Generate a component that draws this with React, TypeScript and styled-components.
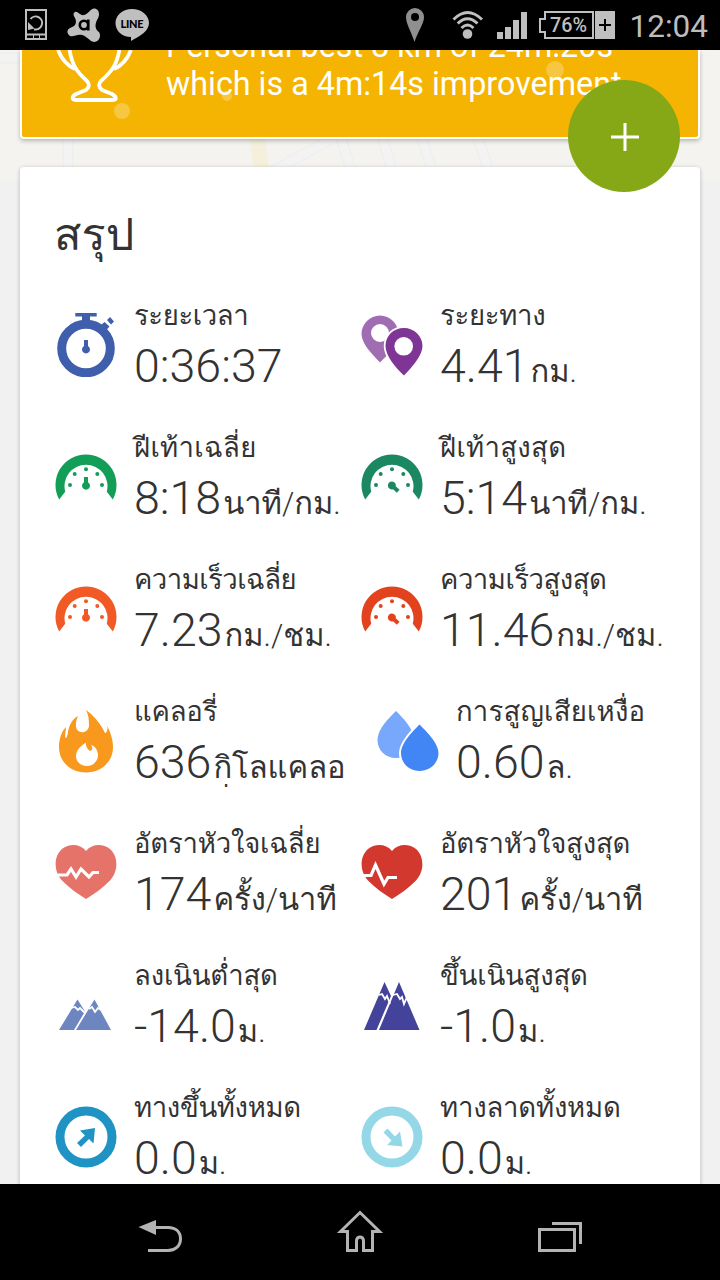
import React from "react";
import styled, { createGlobalStyle } from "styled-components";

const GlobalStyle = createGlobalStyle`
  * { box-sizing: border-box; }
  body { margin: 0; background: #000; font-family: Roboto, Loma, sans-serif; }
  svg { display: block; flex: none; }
`;

const Phone = styled.div`
  width: 720px;
  height: 1280px;
  display: flex;
  flex-direction: column;
  overflow: hidden;
  background: #000;
`;

const StatusBar = styled.header`
  height: 50px;
  flex: none;
  display: flex;
  align-items: center;
  background: #000;
  color: #bfbfbf;
  padding: 0 12px 0 20px;
`;

const Notices = styled.div`
  display: flex;
  flex: 1;
`;

const Clock = styled.div`
  width: 80px;
  margin-left: 12px;
  font-size: 31.5px;
  line-height: 48px;
  white-space: nowrap;
  text-align: right;
  color: #bdbdbd;
  padding-top: 3px;
`;

const Screen = styled.main`
  position: relative;
  flex: 1;
  min-height: 0;
  overflow: hidden;
  background: #f1f1f1;
  padding: 0 20px;
`;

const MapBackdrop = styled.div`
  position: absolute;
  inset: 0 0 auto 0;
  height: 131px;
`;

const Banner = styled.section`
  position: relative;
  height: 89px;
  overflow: hidden;
  border: solid #fff;
  border-width: 0 2px 2px;
  border-radius: 0 0 4px 4px;
  background: #f5b402;
  display: flex;
  box-shadow: 0 2px 4px rgba(0, 0, 0, 0.25);
`;

const BannerArt = styled.div`
  width: 144px;
`;

const BannerText = styled.p`
  position: relative;
  margin: -23px 0 0;
  color: #fff;
  font-size: 32.3px;
  line-height: 38px;
  white-space: nowrap;
`;

const BannerDots = styled.div`
  position: absolute;
  inset: 0;
`;

const AddButton = styled.button`
  position: absolute;
  left: 568px;
  top: 30px;
  width: 112px;
  height: 112px;
  padding: 2px 0 0 2px;
  border: 0;
  border-radius: 50%;
  background: #86a816;
  display: flex;
  align-items: center;
  justify-content: center;
`;

const Card = styled.section`
  position: relative;
  margin-top: 28px;
  height: 1100px;
  border-radius: 4px;
  background: #fff;
  padding: 32px 0 0 34px;
  box-shadow: 0 1px 4px rgba(0, 0, 0, 0.25);
`;

const Title = styled.h1`
  margin: 0;
  height: 93px;
  font-size: 45px;
  font-weight: 300;
  line-height: 72px;
  color: #333;
`;

const Row = styled.div`
  display: flex;
  height: 132px;
`;

const Metric = styled.div<{ $wide?: boolean }>`
  width: ${(p) => (p.$wide ? 322 : 306)}px;
  flex: none;
  display: flex;
`;

const IconBox = styled.div`
  width: 64px;
  height: 64px;
  margin: 21px 16px 0 0;
  flex: none;
`;

const Texts = styled.div`
  color: #333;
  white-space: nowrap;
`;

const Label = styled.div<{ $track: number }>`
  height: 48px;
  font-size: 27.5px;
  font-weight: 400;
  line-height: 48px;
  letter-spacing: ${(p) => p.$track}px;
`;

const Value = styled.div`
  display: flex;
  height: 56px;
  align-items: baseline;
  font-size: 46.5px;
  font-weight: 300;
  line-height: 52px;
`;

const Unit = styled.span`
  height: 38px;
  font-size: 30.9px;
  font-weight: 300;
  line-height: 38px;
  margin-left: 2px;
  clip-path: inset(-20px -5px 0 -5px);
`;

const NavBar = styled.nav`
  height: 96px;
  flex: none;
  background: #000;
`;

const Stopwatch = () => (
  <svg width="64" height="64" viewBox="0 0 64 64" fill="#3f5eab">
    <circle cx="32" cy="35.500" r="24.300" fill="none" stroke="#3f5eab" strokeWidth="9" />
    <path d="M21.300 0H42.700V3.500H36V8H28V3.500H21.300z" />
    <path d="M46 13L50.500 9L55.500 13.500L51.500 18zM53 7L56 4L60 8.500L57 11.500z" />
    <path d="M30 27H34V33A4 4 0 1 1 30 33z" />
  </svg>
);

const Pins = () => (
  <svg width="64" height="64" viewBox="6 0 64 64" fillRule="evenodd">
    <path fill="#a06cb2" d="M26 2.500C36 2.500 44.500 11 44.500 21C44.500 31 33 43 26 49.500C19 42 7.500 31 7.500 21C7.500 11 16 2.500 26 2.500zM26 11A9 9 0 1 0 26 29A9 9 0 1 0 26 11z" />
    <path fill="#7f3596" stroke="#fff" strokeWidth="3.500" paintOrder="stroke" d="M50 15C60 15 68.500 23 68.500 33C68.500 43 57 55 50 62.500C42 55 31.500 43 31.500 33C31.500 23 39 15 50 15z" />
    <circle cx="49.700" cy="33.300" r="9.300" fill="#fff" />
  </svg>
);

const Gauge = ({ color, fast }: { color: string; fast?: boolean }) => (
  <svg width="64" height="64" viewBox="0 0 64 64" fill={color}>
    <path d="M5.200 54.500A30.500 30.500 0 1 1 58.800 54.500L52.800 46.700A21.500 21.500 0 1 0 11.200 46.700z" />
    <circle cx="16" cy="40" r="2" />
    <circle cx="20.700" cy="29" r="2" />
    <circle cx="32" cy="24.300" r="2" />
    <circle cx="43.300" cy="29" r="2" />
    <circle cx="48" cy="40" r="2" />
    <path transform={fast ? "rotate(133 32 40.500)" : undefined} d="M30 32H34V37.200A4 4 0 1 1 30 37.200z" />
  </svg>
);

const Flame = () => (
  <svg width="64" height="64" viewBox="0 0 64 64">
    <path fill="#f8981d" d="M32 1C39 6 45 13 49 20C51 24 51 26 53 22C54 20 53 17 53 17C56 22 59 30 59 38C59 53 47 63.500 32 63.500C17 63.500 5 53 5 38C5 29 8 22 12 18C12 21 10.500 26 11.500 29C13 29 13.500 26 14 23C15 17 18 10 24 7C22 11 21 17 23 20.500C26 25 34 24 35 17C35 12 35 7 32 1z" />
    <path fill="#fff" d="M32 33.500C26 37 22 42 22 47C22 53 27 57 33 57C39 57 44 52 44 46.500C44 41 41 37 37 36C39 39 38.500 41 36 42C33 40 31.500 37 32 33.500z" />
  </svg>
);

const Drops = () => (
  <svg width="64" height="64" viewBox="0 0 64 64">
    <path fill="#78a8fb" d="M20 2C27 9 38 20 38 31C38 42 30 49 20 49C9 49 1.500 41 1.500 31C1.500 20 13 9 20 2z" />
    <path fill="#4285f4" stroke="#fff" strokeWidth="4" paintOrder="stroke" d="M43.500 15.500C50 22 62.500 34 62.500 44C62.500 54 54 62 43.500 62C33 62 25 54 25 44C25 34 37 22 43.500 15.500z" />
  </svg>
);

const Heart = ({ color, pulse }: { color: string; pulse: string }) => (
  <svg width="64" height="64" viewBox="0 0 64 64">
    <path fill={color} d="M32 10C38 2.500 49 2.500 56 8C65 16 64 31 56 39.500C49 47 40 53 32 58C24 53 15 47 8 39.500C0 31-1 16 8 8C15 2.500 26 2.500 32 10z" />
    <path fill="none" stroke="#fff" strokeWidth="3.200" d={pulse} />
  </svg>
);

const HillsLow = () => (
  <svg width="64" height="64" viewBox="0 -4 64 64">
    <path fill="#6e86c0" d="M5 53L23.500 22.500L31 34.500L20 53zM22 53L40.500 22.500L57 53z" />
    <path fill="none" stroke="#fff" strokeWidth="1.800" d="M17 31L21 30L24 33L26 31L31 36M35 32L38 30L41 35L44 31L47 33" />
  </svg>
);

const HillsHigh = () => (
  <svg width="64" height="64" viewBox="-2 -4 64 64">
    <path fill="#43439b" d="M2 53L22.500 5L29 19L14.500 53zM17 53L37 5L57.500 53z" />
    <path fill="none" stroke="#fff" strokeWidth="1.800" d="M17 18L20 17L23 22L25 19L28 27M31 18L35 17L38 22L40 20L42 27L45 20" />
  </svg>
);

const ArrowRing = ({ color, down }: { color: string; down?: boolean }) => (
  <svg width="64" height="64" viewBox="0 0 64 64">
    <circle cx="32" cy="32" r="26" fill="none" stroke={color} strokeWidth="9" />
    <path fill={color} transform={down ? "translate(1.500 0.500) rotate(90 32 32)" : undefined} d="M41 23L39.500 38.500L35 34L27 42L23 38L31 30.500L26 25.500z" />
  </svg>
);

type Item = {
  icon: React.ReactNode;
  label: string;
  value: string;
  unit?: React.ReactNode;
  track?: number;
  wide?: boolean;
};

const rows: Item[][] = [
  [
    { icon: <Stopwatch />, label: "ระยะเวลา", value: "0:36:37", track: -0.4 },
    { icon: <Pins />, label: "ระยะทาง", value: "4.41", unit: "กม.", track: -0.3 },
  ],
  [
    { icon: <Gauge color="#139e58" />, label: "ฝีเท้าเฉลี่ย", value: "8:18", unit: "นาที/กม.", track: 0.3 },
    { icon: <Gauge color="#1b8862" fast />, label: "ฝีเท้าสูงสุด", value: "5:14", unit: "นาที/กม.", track: 0.3 },
  ],
  [
    { icon: <Gauge color="#f15a24" />, label: "ความเร็วเฉลี่ย", value: "7.23", unit: "กม./ชม.", track: -0.55 },
    { icon: <Gauge color="#e2431e" fast />, label: "ความเร็วสูงสุด", value: "11.46", unit: "กม./ชม.", track: -0.5 },
  ],
  [
    { icon: <Flame />, label: "แคลอรี่", value: "636", unit: <>กิโลแคลอ<br />รี่</>, wide: true, track: -0.2 },
    { icon: <Drops />, label: "การสูญเสียเหงื่อ", value: "0.60", unit: "ล.", track: 0.2 },
  ],
  [
    { icon: <Heart color="#e67369" pulse="M4 34H13L17 28L22 36L27 28L35 36L39 31.500H45" />, label: "อัตราหัวใจเฉลี่ย", value: "174", unit: "ครั้ง/นาที", track: -0.2 },
    { icon: <Heart color="#d3382f" pulse="M4 34.500H11L15.500 24L24 43L28 36.500H37" />, label: "อัตราหัวใจสูงสุด", value: "201", unit: "ครั้ง/นาที", track: -0.2 },
  ],
  [
    { icon: <HillsLow />, label: "ลงเนินต่ำสุด", value: "-14.0", unit: "ม.", track: -0.2 },
    { icon: <HillsHigh />, label: "ขึ้นเนินสูงสุด", value: "-1.0", unit: "ม.", track: -0.2 },
  ],
  [
    { icon: <ArrowRing color="#1f93c3" />, label: "ทางขึ้นทั้งหมด", value: "0.0", unit: "ม.", track: -0.35 },
    { icon: <ArrowRing color="#94d8e7" down />, label: "ทางลาดทั้งหมด", value: "0.0", unit: "ม.", track: -0.2 },
  ],
];

const roads = "M0 8H40M68 80V131M265 125L330 90M382 85L391 118M421 85L431 118M477 85L488 118M340 85L354 131";

export default function App() {
  return (
    <Phone>
      <GlobalStyle />
      <StatusBar>
        <Notices>
          <svg width="140" height="50" viewBox="20 0 140 50" fill="#bfbfbf">
            <path fill="none" stroke="#bfbfbf" strokeWidth="2" d="M26 10H46V39H26zM26 34.500H46" />
            <path fill="none" stroke="#bfbfbf" strokeWidth="2" d="M30.500 19A6.500 6.500 0 1 1 34 29.300" />
            <path d="M28 22V30L34.500 28.500z" />
            <path fill="none" stroke="#bfbfbf" strokeWidth="1" d="M33.500 35V39M39.500 35V39" />
            <path d="M75 12C78 11 80 16 84 15C89 14 90 8 95 8.500C100 10 100 16 97 20C94 26 96 30 99 32C102 37 98 42 94 42C89 41 87 36 82 35C77 34 74 37 70 36C66 33 67 29 71 27.500C76 26 77 22 75 18C73 15 73 13 75 12z" />
            <path fill="none" stroke="#000" strokeWidth="2.600" d="M88.300 19.500V30.500M84 20.800A4.200 4.200 0 1 0 84 29.200A4.200 4.200 0 1 0 84 20.800" />
            <path d="M132 9C141 9 149 15 149 23C149 31 140 36 131 41L131 37C122 37 115.500 31 115.500 23C115.500 15 123 9 132 9z" />
            <text x="132" y="27.500" fontSize="11" fontWeight="900" textAnchor="middle" fill="#000" textLength="23" fontFamily="Lato, sans-serif">LINE</text>
          </svg>
        </Notices>
        <svg width="216" height="50" viewBox="400 0 216 50" fill="#bfbfbf">
          <path fill="#8f8f8f" fillRule="evenodd" d="M415 8A9 9 0 0 1 424 17C424 24 418 31 414.500 42C411 31 406 24 406 17A9 9 0 0 1 415 8zM415 13A4 4 0 1 0 415 21A4 4 0 1 0 415 13z" />
          <circle cx="467.500" cy="34" r="4.800" />
          <path fill="none" stroke="#bfbfbf" strokeWidth="3" d="M453.500 19.500Q467.500 5.500 482 19.500M457.700 23.500Q467.500 14 477.500 23.500M461.500 28Q467.500 22 473.500 28" />
          <path d="M497 32H503V39H497zM505 27H511V39H505zM513 20H519V39H513zM521 12H527V39H521z" />
          <path fill="none" stroke="#bfbfbf" strokeWidth="2" d="M545 12H593V38H545V32H540V19H545z" />
          <path fillRule="evenodd" d="M595 11H615V39H595zM604 19V24H599V26H604V31H606V26H611V24H606V19z" />
          <text x="568.500" y="32" fontSize="20.500" textAnchor="middle" textLength="37" lengthAdjust="spacingAndGlyphs" fontFamily="Roboto, sans-serif" fontWeight="500">76%</text>
        </svg>
        <Clock>12:04</Clock>
      </StatusBar>
      <Screen>
        <MapBackdrop>
          <svg width="720" height="131" viewBox="0 0 720 131">
            <path fill="#f4f3ef" d="M0 0H720V131H0z" />
            <path fill="none" stroke="#eeeeec" strokeWidth="11" d={roads} />
            <path fill="none" stroke="#f3f3f4" strokeWidth="8.500" d={roads} />
            <path stroke="#f5f0dc" strokeWidth="15" d="M256 80L263 131" />
          </svg>
        </MapBackdrop>
        <Banner>
          <BannerDots>
            <svg width="676" height="87" viewBox="22 50 676 87" fill="#fff" fillOpacity="0.25">
              <circle cx="122" cy="111" r="8" />
              <circle cx="227" cy="96" r="5" />
              <circle cx="555" cy="70" r="9" />
            </svg>
          </BannerDots>
          <BannerArt>
            <svg width="144" height="60" viewBox="22 50 144 60" fill="none" stroke="#fff" strokeWidth="3.800" strokeLinejoin="round">
              <path d="M69 45C71 65 77 72 87 81C90 84 89 88 86 90L76 94C71 97 72 100 76 100H112C117 100 117 97 112 94L102 90C99 88 98 84 101 81C111 72 118 65 120 45" />
              <path d="M58 50C62 60 68 66 75 69M131 50C127 60 121 66 114 69" />
            </svg>
          </BannerArt>
          <BannerText>
            Personal best 8 km of 24m:20s
            <br />
            which is a 4m:14s improvement
          </BannerText>
        </Banner>
        <Card>
          <Title>สรุป</Title>
          {rows.map((row, i) => (
            <Row key={i}>
              {row.map((m) => (
                <Metric key={m.label} $wide={m.wide}>
                  <IconBox>{m.icon}</IconBox>
                  <Texts>
                    <Label $track={m.track ?? 0}>{m.label}</Label>
                    <Value>
                      {m.value}
                      {m.unit && <Unit>{m.unit}</Unit>}
                    </Value>
                  </Texts>
                </Metric>
              ))}
            </Row>
          ))}
        </Card>
        <AddButton aria-label="เพิ่ม">
          <svg width="28" height="28" viewBox="0 0 28 28" stroke="#fff" strokeWidth="3">
            <path d="M0 14H28M14 0V28" />
          </svg>
        </AddButton>
      </Screen>
      <NavBar>
        <svg width="720" height="96" viewBox="0 1184 720 96" fill="none" stroke="#b3b3b3" strokeWidth="3">
          <path d="M153 1227.500H168C176 1227.500 180.500 1232 180.500 1239C180.500 1246 175 1250.500 168 1250.500H148" />
          <path fill="#b3b3b3" stroke="none" d="M138.500 1227L156 1220V1235z" />
          <path d="M340.500 1231.500L360 1212.500L379.500 1231.500H372.500V1250.500H363.500V1241C363.500 1235.500 356.500 1235.500 356.500 1241V1250.500H347.500V1231.500z" />
          <path d="M539.500 1229.500H574.500V1250.500H539.500zM552 1223.500H580.500V1244" />
        </svg>
      </NavBar>
    </Phone>
  );
}
